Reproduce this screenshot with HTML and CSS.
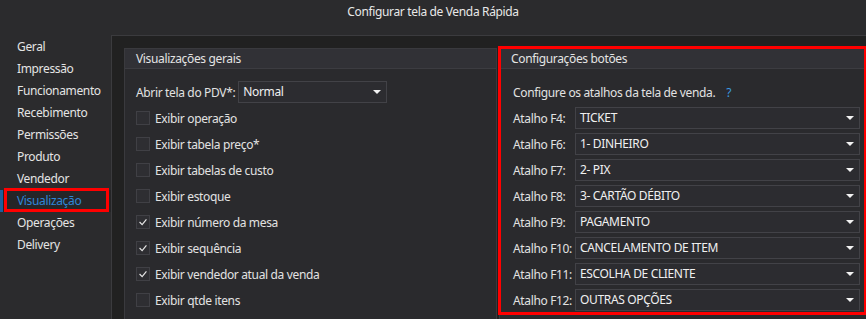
FILE: index.html
```html
<!DOCTYPE html>
<html lang="pt-BR">

<head>
    <meta charset="UTF-8">
    <meta name="viewport" content="width=device-width, initial-scale=1.0">
    <title>Configurar tela de Venda Rápida</title>
    <link rel="stylesheet" href="styles.css">
</head>

<body>
    <header class="title">Configurar tela de Venda Rápida</header>
    <div class="window">
        <nav class="side">
            <p class="side-item">Geral</p>
            <p class="side-item">Impressão</p>
            <p class="side-item">Funcionamento</p>
            <p class="side-item">Recebimento</p>
            <p class="side-item">Permissões</p>
            <p class="side-item">Produto</p>
            <p class="side-item">Vendedor</p>
            <p class="side-item active">Visualização</p>
            <p class="side-item">Operações</p>
            <p class="side-item">Delivery</p>
        </nav>
        <main class="panel">
            <section class="group group-views">
                <div class="group-head">Visualizações gerais</div>
                <div class="group-body">
                    <div class="row">
                        <span class="row-label">Abrir tela do PDV*:</span>
                        <div class="select select-short">Normal</div>
                    </div>
                    <div class="row"><span class="box"></span>Exibir operação</div>
                    <div class="row"><span class="box"></span>Exibir tabela preço*</div>
                    <div class="row"><span class="box"></span>Exibir tabelas de custo</div>
                    <div class="row"><span class="box"></span>Exibir estoque</div>
                    <div class="row"><span class="box checked"><svg viewBox="0 0 14 14"><polyline points="3,7 6,10 11,4"/></svg></span>Exibir número da mesa</div>
                    <div class="row"><span class="box checked"><svg viewBox="0 0 14 14"><polyline points="3,7 6,10 11,4"/></svg></span>Exibir sequência</div>
                    <div class="row"><span class="box checked"><svg viewBox="0 0 14 14"><polyline points="3,7 6,10 11,4"/></svg></span>Exibir vendedor atual da venda</div>
                    <div class="row"><span class="box"></span>Exibir qtde itens</div>
                </div>
            </section>
            <section class="group group-keys">
                <div class="group-head">Configurações botões</div>
                <div class="group-body">
                    <div class="row">Configure os atalhos da tela de venda.<span class="help">?</span></div>
                    <div class="row"><span class="key-label">Atalho F4:</span><div class="select">TICKET</div></div>
                    <div class="row"><span class="key-label">Atalho F6:</span><div class="select">1- DINHEIRO</div></div>
                    <div class="row"><span class="key-label">Atalho F7:</span><div class="select">2- PIX</div></div>
                    <div class="row"><span class="key-label">Atalho F8:</span><div class="select">3- CARTÃO DÉBITO</div></div>
                    <div class="row"><span class="key-label">Atalho F9:</span><div class="select">PAGAMENTO</div></div>
                    <div class="row"><span class="key-label">Atalho F10:</span><div class="select">CANCELAMENTO DE ITEM</div></div>
                    <div class="row"><span class="key-label">Atalho F11:</span><div class="select">ESCOLHA DE CLIENTE</div></div>
                    <div class="row"><span class="key-label">Atalho F12:</span><div class="select">OUTRAS OPÇÕES</div></div>
                </div>
            </section>
        </main>
    </div>
</body>

</html>
```

FILE: styles.css
```css
*,
*::before,
*::after {
    margin: 0;
    padding: 0;
    box-sizing: border-box;
}

body {
    width: 866px;
    height: 319px;
    overflow: hidden;
    background-color: #2b2b2d;
    font-family: 'Noto Sans', 'Open Sans', sans-serif;
    font-size: 12px;
    letter-spacing: -0.35px;
    color: #e2e2e2;
}

.title {
    height: 35px;
    padding-top: 4px;
    line-height: 16px;
    text-align: center;
    color: #e8e8e8;
}

.window {
    display: flex;
    height: 284px;
}

.side {
    width: 111px;
    flex-shrink: 0;
    padding-top: 1px;
}

.side-item {
    position: relative;
    height: 22px;
    line-height: 22px;
    padding-left: 17px;
    color: #e4e4e4;
}

.side-item.active {
    color: #2f86d6;
    background-color: #252527;
    box-shadow: inset 3px 0 0 #1f5f9c;
}

/* red marker around the current page */
.side-item.active::after {
    content: '';
    position: absolute;
    left: 4px;
    top: -2px;
    width: 105px;
    height: 24px;
    border: 3px solid #ff0000;
}

.panel {
    flex: 1;
    display: flex;
    gap: 2px;
    padding: 12px 0 0 12px;
    background-color: #212121;
    border-top: 1px solid #3b3b3e;
    border-left: 1px solid #3b3b3e;
    overflow: hidden;
}

.group {
    position: relative;
    height: 290px;
    background-color: #2a2a2d;
    border: 1px solid #3a3a3e;
    flex-shrink: 0;
}

.group-views {
    width: 373px;
}

.group-keys {
    width: 372px;
}

/* red marker around the shortcut box */
.group-keys::after {
    content: '';
    position: absolute;
    left: -2px;
    top: -3px;
    width: 369px;
    height: 269px;
    border: 3px solid #ff0000;
}

.group-head {
    height: 20px;
    line-height: 20px;
    padding-left: 11px;
    background-color: #313136;
    border-bottom: 1px solid #3c3c41;
    color: #e4e4e4;
}

.group-body {
    padding: 10px 0 0 11px;
}

.group-keys .group-body {
    padding-left: 13px;
    padding-right: 10px;
}

.row {
    display: flex;
    align-items: center;
    height: 26px;
    white-space: nowrap;
}

.row-label {
    margin-right: 3px;
}

.key-label {
    width: 62px;
    flex-shrink: 0;
}

.select {
    position: relative;
    flex: 1;
    height: 22px;
    line-height: 20px;
    padding-left: 4px;
    background-color: #2c2c30;
    border: 1px solid #424247;
    color: #f0f0f0;
}

.select::after {
    content: '';
    position: absolute;
    right: 5px;
    top: 8px;
    border-left: 4px solid transparent;
    border-right: 4px solid transparent;
    border-top: 4px solid #f2f2f2;
}

.select-short {
    flex: none;
    width: 149px;
}

.box {
    display: inline-block;
    width: 14px;
    height: 14px;
    margin-right: 5px;
    background-color: #2e2e32;
    border: 1px solid #404045;
}

.box svg {
    display: block;
    width: 12px;
    height: 12px;
    fill: none;
    stroke: #e6e6e6;
    stroke-width: 1.4;
}

.help {
    margin-left: 11px;
    color: #3a9be0;
}
```
